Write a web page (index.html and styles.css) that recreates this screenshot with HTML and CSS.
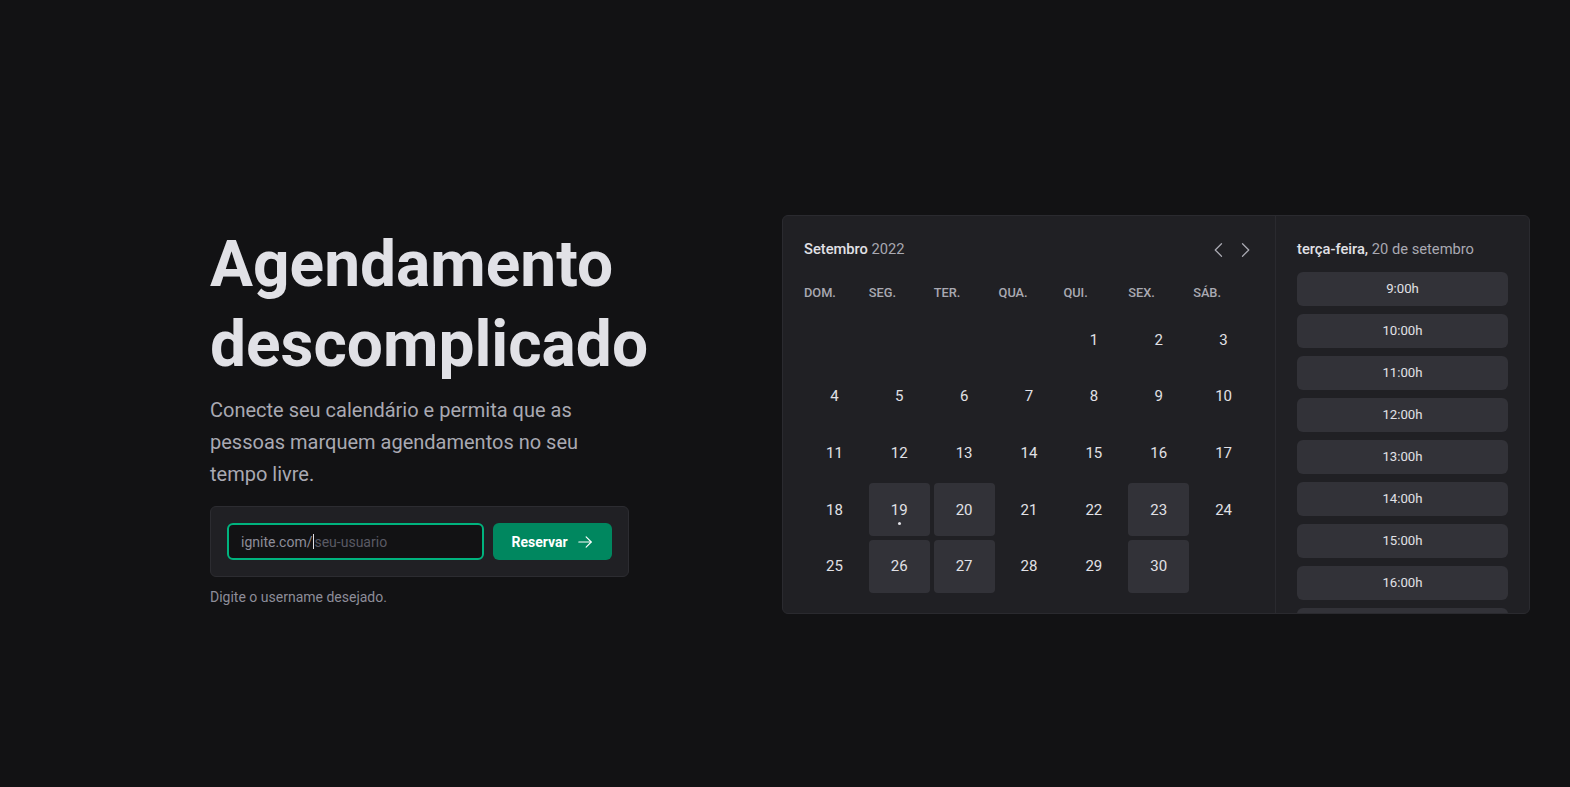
FILE: index.html
```html
<!DOCTYPE html>
<html lang="pt-BR">
<head>
<meta charset="utf-8">
<title>Ignite Call</title>
<link rel="stylesheet" href="styles.css">
</head>
<body>
<main class="page">
  <section class="hero">
    <h1 class="title">Agendamento descomplicado</h1>
    <p class="lead">Conecte seu calendário e permita que as pessoas marquem agendamentos no seu tempo livre.</p>
    <form class="claim">
      <div class="field"><span class="prefix">ignite.com/</span><span class="caret"></span><span class="placeholder">seu-usuario</span></div>
      <button class="btn" type="button">Reservar
        <svg class="btn-icon" viewBox="0 0 256 256" width="18" height="18" fill="none" stroke="currentColor" stroke-width="16" stroke-linecap="round" stroke-linejoin="round"><line x1="40" y1="128" x2="216" y2="128"/><polyline points="144,56 216,128 144,200"/></svg>
      </button>
    </form>
    <p class="hint">Digite o username desejado.</p>
  </section>

  <section class="preview">
    <div class="card">
      <div class="calendar">
        <header class="cal-head">
          <span class="cal-title"><strong>Setembro</strong> <span class="muted">2022</span></span>
          <div class="cal-nav">
            <button class="nav-btn" type="button" aria-label="Mês anterior"><svg viewBox="0 0 256 256" width="20" height="20" fill="none" stroke="currentColor" stroke-width="16" stroke-linecap="round" stroke-linejoin="round"><polyline points="160,208 80,128 160,48"/></svg></button>
            <button class="nav-btn" type="button" aria-label="Próximo mês"><svg viewBox="0 0 256 256" width="20" height="20" fill="none" stroke="currentColor" stroke-width="16" stroke-linecap="round" stroke-linejoin="round"><polyline points="96,48 176,128 96,208"/></svg></button>
          </div>
        </header>
        <div class="weekdays">
          <span>DOM.</span><span>SEG.</span><span>TER.</span><span>QUA.</span><span>QUI.</span><span>SEX.</span><span>SÁB.</span>
        </div>
        <div class="days">
          <span class="day empty"></span><span class="day empty"></span><span class="day empty"></span><span class="day empty"></span>
          <span class="day">1</span><span class="day">2</span><span class="day">3</span>
          <span class="day">4</span><span class="day">5</span><span class="day">6</span><span class="day">7</span><span class="day">8</span><span class="day">9</span><span class="day">10</span>
          <span class="day">11</span><span class="day">12</span><span class="day">13</span><span class="day">14</span><span class="day">15</span><span class="day">16</span><span class="day">17</span>
          <span class="day">18</span><span class="day available today">19</span><span class="day available">20</span><span class="day">21</span><span class="day">22</span><span class="day available">23</span><span class="day">24</span>
          <span class="day">25</span><span class="day available">26</span><span class="day available">27</span><span class="day">28</span><span class="day">29</span><span class="day available">30</span><span class="day empty"></span>
        </div>
      </div>
      <div class="times">
        <p class="times-head"><strong>terça-feira,</strong> <span class="muted">20 de setembro</span></p>
        <div class="time-list">
          <span class="time">9:00h</span>
          <span class="time">10:00h</span>
          <span class="time">11:00h</span>
          <span class="time">12:00h</span>
          <span class="time">13:00h</span>
          <span class="time">14:00h</span>
          <span class="time">15:00h</span>
          <span class="time">16:00h</span>
          <span class="time">17:00h</span>
        </div>
      </div>
    </div>
  </section>
</main>
</body>
</html>
```

FILE: styles.css
```css
* { box-sizing: border-box; }

html, body {
  margin: 0;
  background: #121214;
  color: #E1E1E6;
  font-family: Roboto, "Liberation Sans", sans-serif;
}

.page {
  height: 100vh;
  padding-top: 42px;
  display: flex;
  align-items: center;
  overflow: hidden;
}

/* ---------- hero ---------- */
.hero {
  margin-left: 210px;
  margin-top: 5px;
  width: 419px;
  flex: none;
}

.title {
  margin: 0;
  font-size: 64px;
  line-height: 1.25;
  font-weight: 700;
  color: #E1E1E6;
}

.lead {
  margin: 9px 0 0;
  font-size: 20px;
  line-height: 1.6;
  color: #A9A9B2;
}

.claim {
  margin-top: 16px;
  display: flex;
  gap: 9px;
  padding: 16px;
  background: #202024;
  border: 1px solid #2C2C31;
  border-radius: 6px;
}

.field {
  flex: 1;
  height: 37px;
  display: flex;
  align-items: center;
  padding: 0 12px;
  background: #121214;
  border: 2px solid #00B37E;
  border-radius: 6px;
  font-size: 14px;
}

.prefix { color: #8D8D99; }
.caret {
  width: 1px;
  height: 15px;
  background: #E1E1E6;
  margin-left: 1px;
}
.placeholder { color: #5A5A64; }

.btn {
  flex: none;
  width: 119px;
  height: 37px;
  display: flex;
  align-items: center;
  justify-content: center;
  gap: 8px;
  padding: 0;
  border: 0;
  border-radius: 6px;
  background: #00875F;
  color: #FFFFFF;
  font-family: inherit;
  font-size: 14px;
  font-weight: 700;
}
.btn-icon { display: block; }

.hint {
  margin: 9px 0 0;
  font-size: 14px;
  line-height: 1.6;
  color: #8D8D99;
}

/* ---------- preview ---------- */
.preview {
  margin-left: auto;
  margin-right: 40px;
  flex: none;
}

.card {
  display: flex;
  width: 748px;
  background: #202024;
  border: 1px solid #2A2A2F;
  border-radius: 6px;
  overflow: hidden;
}

.calendar {
  flex: 0 0 493px;
  padding: 21px 21px 20px;
  border-right: 1px solid #2A2A2F;
}

.cal-head {
  display: flex;
  align-items: center;
  justify-content: space-between;
  height: 25.6px;
  font-size: 14.7px;
  line-height: 25.6px;
}
.cal-title strong { font-weight: 500; color: #E1E1E6; }
.muted { color: #A9A9B2; font-weight: 400; }

.cal-nav {
  display: flex;
  gap: 6px;
  margin-right: -1px;
}
.nav-btn {
  display: block;
  width: 20px;
  height: 20px;
  padding: 0;
  border: 0;
  background: none;
  color: #A9A9B2;
}
.nav-btn svg { display: block; }

.weekdays {
  margin-top: 19.7px;
  display: grid;
  grid-template-columns: repeat(7, 1fr);
  column-gap: 4px;
  font-size: 12.8px;
  line-height: 22.4px;
  font-weight: 500;
  color: #A9A9B2;
}

.days {
  margin-top: 8.5px;
  display: grid;
  grid-template-columns: repeat(7, 1fr);
  grid-auto-rows: 52.7px;
  gap: 4px;
}

.day {
  position: relative;
  display: flex;
  align-items: center;
  justify-content: center;
  border-radius: 4px;
  font-size: 15px;
  color: #E1E1E6;
}
.day.available { background: #323238; }
.day.today::after {
  content: "";
  position: absolute;
  left: 50%;
  top: 50%;
  width: 3px;
  height: 3px;
  margin: 12.6px 0 0 -1.5px;
  border-radius: 50%;
  background: #E1E1E6;
}

.times {
  flex: 0 0 253px;
  contain: size;
  overflow: hidden;
  padding: 21px 21px 0;
}

.times-head {
  margin: 0;
  font-size: 14.7px;
  line-height: 25.6px;
}
.times-head strong { font-weight: 500; color: #E1E1E6; }

.time-list {
  margin-top: 9px;
  display: flex;
  flex-direction: column;
  gap: 8px;
}

.time {
  height: 34px;
  display: flex;
  align-items: center;
  justify-content: center;
  background: #323238;
  border-radius: 6px;
  font-size: 13.2px;
  color: #E1E1E6;
}
```
